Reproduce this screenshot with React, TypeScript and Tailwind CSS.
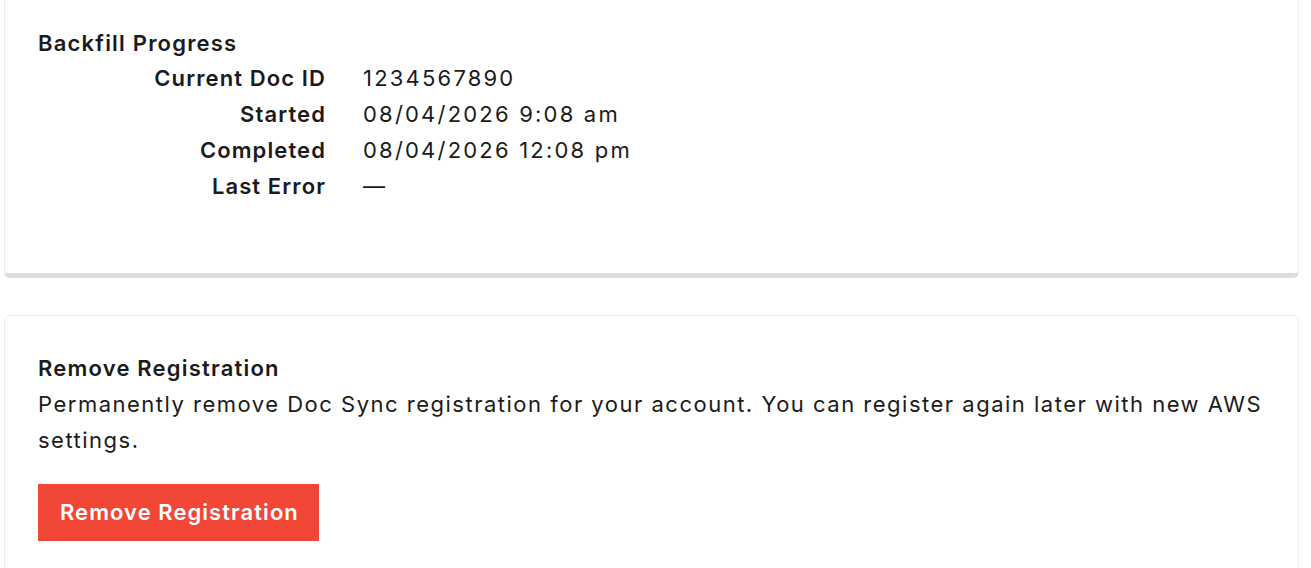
const rows = [
  { label: 'Current Doc ID', value: '1234567890' },
  { label: 'Started', value: '08/04/2026 9:08 am' },
  { label: 'Completed', value: '08/04/2026 12:08 pm' },
  { label: 'Last Error', value: '—' },
];

const App = () => {
  return (
    <div className="min-h-screen bg-white pl-[4px] pr-[12px] text-[#1b1b1b]" style={{ fontFamily: 'Inter, "Noto Sans", sans-serif' }}>
      {/* backfill card, scrolled so its top edge is above the fold */}
      <div className="rounded-b-[6px] border-x border-[#eeeeee] border-b-[5px] border-b-[#dddddd] bg-white px-[33px] pt-[27px] pb-[69px]">
        <h2 className="text-[22px] font-semibold leading-[32px] tracking-[1.2px]">Backfill Progress</h2>
        <div className="mt-[1px] grid grid-cols-[288px_1fr] gap-x-[37px] text-[22px] leading-[36px]">
          {rows.map((row) => (
            <div key={row.label} className="contents">
              <div className="text-right font-semibold tracking-[1.1px]">{row.label}</div>
              <div className="tracking-[2.2px]">{row.value}</div>
            </div>
          ))}
        </div>
      </div>

      <div className="mt-[37px] rounded-[6px] border border-[#eeeeee] bg-white px-[33px] pt-[34px] pb-[40px]">
        <h2 className="text-[22px] font-semibold leading-[36px] tracking-[1.2px]">Remove Registration</h2>
        <p className="text-[22px] leading-[36px] tracking-[1.5px]">
          Permanently remove Doc Sync registration for your account. You can register again later with new AWS settings.
        </p>
        <button className="mt-[26px] h-[57px] bg-[#f24636] pl-[22px] pr-[20px] text-[22px] font-semibold tracking-[1.05px] text-white">
          Remove Registration
        </button>
      </div>
    </div>
  );
};

export default App;
